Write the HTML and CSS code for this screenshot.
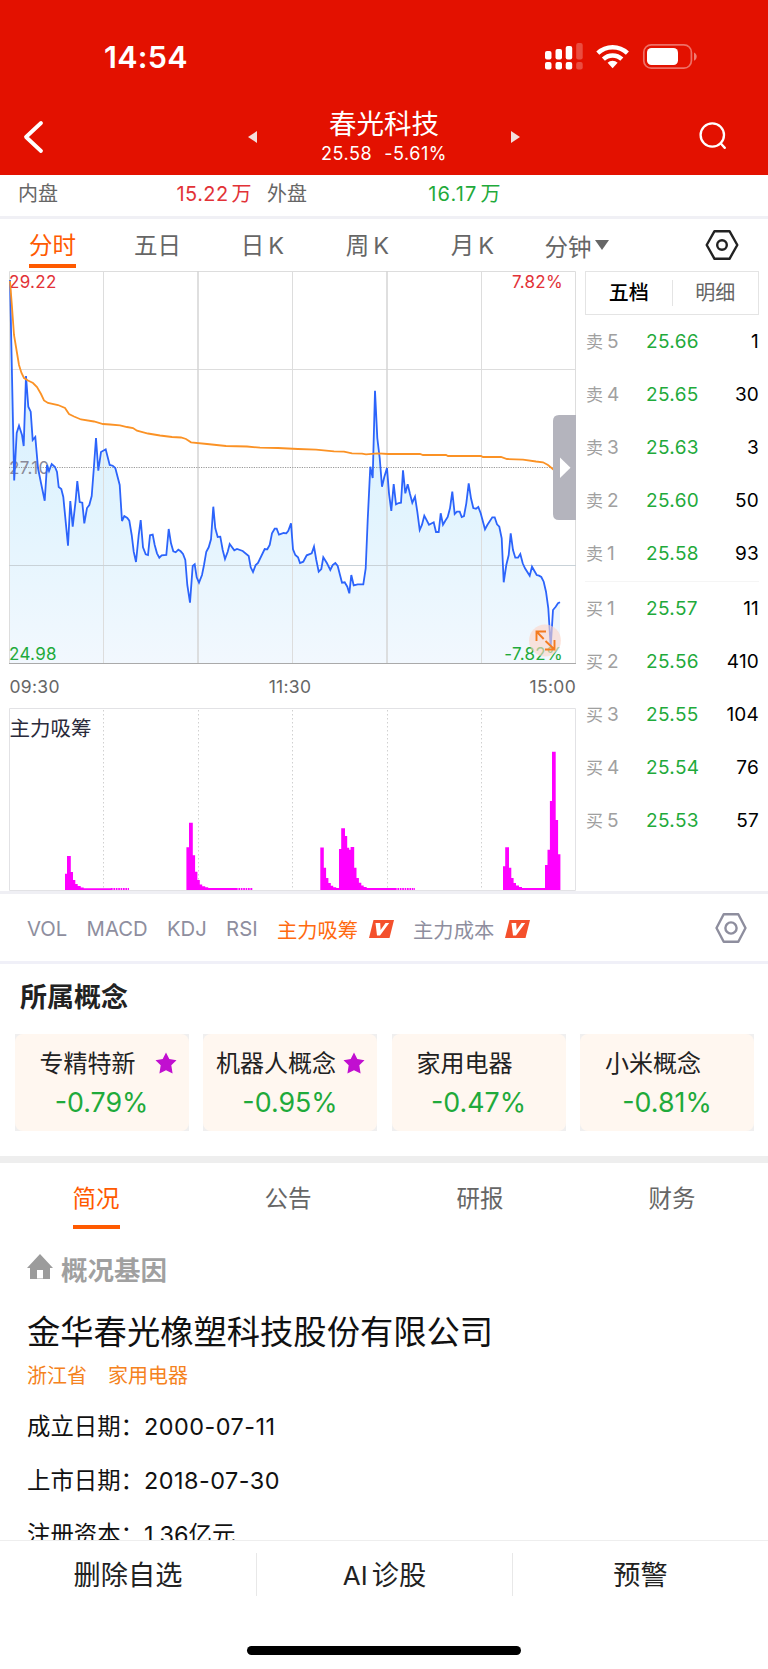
FILE: index.html
```
<!DOCTYPE html>
<html lang="zh-CN">
<head>
<meta charset="utf-8">
<title>春光科技</title>
<link rel="stylesheet" href="styles.css">
</head>
<body>
<div class="phone">

<header class="top">
    <div class="status">
        <span class="time">14:54</span>
        <svg class="status-icons" viewBox="540 40 160 32">
            <g fill="#fff">
                <rect x="545" y="51" width="6.5" height="8.5" rx="2"/><rect x="545" y="62" width="6.5" height="7.5" rx="2"/>
                <rect x="555.5" y="49" width="6.5" height="10.5" rx="2"/><rect x="555.5" y="62" width="6.5" height="7.5" rx="2"/>
                <rect x="565.7" y="46" width="6.5" height="13.5" rx="2"/><rect x="565.7" y="62" width="6.5" height="7.5" rx="2"/>
                <g opacity=".25"><rect x="576.2" y="43" width="6.5" height="16.5" rx="2"/><rect x="576.2" y="62" width="6.5" height="7.5" rx="2"/></g>
            </g>
            <g fill="none" stroke="#fff" stroke-width="4.4">
                <path d="M597.8 53.2a21.4 21.4 0 0 1 29.6 0"/>
                <path d="M603.4 59.2a13.2 13.2 0 0 1 18.4 0"/>
            </g>
            <path d="M607.6 62.8a7.2 7.2 0 0 1 10 0l-5 5.4z" fill="#fff"/>
            <rect x="643.8" y="44.8" width="47.6" height="23.4" rx="7.5" fill="none" stroke="#fff" stroke-opacity=".4" stroke-width="1.7"/>
            <rect x="647" y="48" width="31" height="17" rx="4.5" fill="#fff"/>
            <path d="M694 52.5c3.6 1.4 3.6 6.8 0 8.2z" fill="#fff" opacity=".45"/>
        </svg>
    </div>
    <div class="nav">
        <svg class="back" viewBox="0 0 24 36"><path d="M20 4L5 18l15 14" fill="none" stroke="#fff" stroke-width="3.8" stroke-linecap="round" stroke-linejoin="round"/></svg>
        <svg class="arrow" viewBox="0 0 9 12"><path d="M9 0v12L0 6z" fill="#f3dedc"/></svg>
        <div class="stock">
            <div class="stock-name">春光科技</div>
            <div class="stock-price"><span>25.58</span><span>-5.61%</span></div>
        </div>
        <svg class="arrow" viewBox="0 0 9 12"><path d="M0 0v12l9-6z" fill="#f3dedc"/></svg>
        <svg class="search" viewBox="0 0 30 30"><g fill="none" stroke="#fff" stroke-width="2.3" stroke-linecap="round"><circle cx="14.3" cy="14" r="11.7"/><path d="M22.6 22.3l4.2 4.6"/></g></svg>
    </div>
</header>

<div class="quote">
    <span class="quote-label">内盘</span><span class="quote-value up">15.22<i>万</i></span>
    <span class="quote-label">外盘</span><span class="quote-value down">16.17<i>万</i></span>
</div>

<nav class="periods">
    <a class="period active"><span>分时</span></a>
    <a class="period"><span>五日</span></a>
    <a class="period"><span>日<b>K</b></span></a>
    <a class="period"><span>周<b>K</b></span></a>
    <a class="period"><span>月<b>K</b></span></a>
    <a class="period minute"><span>分钟</span><svg viewBox="0 0 14 10"><path d="M0 0h14L7 10z" fill="#666"/></svg></a>
    <svg class="setting" viewBox="0 0 34 32"><g fill="none" stroke="#222" stroke-width="2.4" stroke-linejoin="round"><path d="M9.5 2.2h15L32.3 16l-7.8 13.8h-15L1.7 16z"/><circle cx="17" cy="16" r="4.8"/></g></svg>
</nav>

<main class="market">
    <div class="charts">
        <!-- chart coordinates are page coordinates -->
        <svg class="chart" viewBox="0 271 580 620">
            <defs>
                <linearGradient id="area" x1="0" y1="280" x2="0" y2="664" gradientUnits="userSpaceOnUse">
                    <stop offset="0" stop-color="#d2edfd"/><stop offset=".6" stop-color="#e2f4fe"/><stop offset="1" stop-color="#f2f8fe"/>
                </linearGradient>
            </defs>
            <path fill="url(#area)" d="M10 663V280L14.2 480.5 16.7 433 19 425.7 22 435 23.7 446 26 376 28.3 406.7 30.7 411.7 32.7 440 35.3 437 38 468 41 483 44.7 500.7 47 465 49 471 51.7 464 55 467 57 472 58.7 487 61.3 489 63.3 497 68 545.7 70.3 501 72.7 526.7 75.7 500 77.3 481 79.7 502 82.3 502.7 84.3 523.3 87 508 89.3 505 91.7 496 93.7 470 96 438 98.3 470.7 101 452 105.7 449.3 109.7 465 112.7 465.7 115.3 468 119.7 485 122 521 124.3 516 127.3 518 129.3 520.7 131.7 535 133.7 551.7 136 562 138.7 535 140.7 520 143 547.3 145.7 554.3 148 555 150 535.3 152.7 534.7 154.7 545 157 553.3 159.3 557.7 161.7 555.3 166.3 555 168.7 529 171 543.3 173.3 551.3 175.7 552.3 178.3 549.7 180.7 551.3 183 554 185.3 560 187.3 585 190 602.7 192.7 566 194.7 564.3 196.7 577.3 199 582.7 202 575 204 565 206.3 551.7 208.7 547.3 211 539.3 213.3 506.7 215.3 528.3 217.7 537 220.3 536.7 222.7 550 225 559 227.7 551.7 229.7 544 234.3 550.3 237 549 242.7 551 248.7 556 250.7 567.3 253 572 255.7 565 258 563 264.7 549 267.3 549.3 269.7 545 272 533.3 274.7 528.7 276.7 528.7 279 534.7 283.7 533 286.3 533.3 288.3 530.7 291 523.3 293 549.3 295.3 555 298 557.3 300 563 303.3 561.7 306.7 555.3 311.7 553.3 314 546.7 316.3 560 318.7 571.7 321.3 569 323.3 557.3 327 563.3 330.3 570 332.7 565 335.3 563 337.7 566 340 575 342 582.7 344.7 582.3 347.3 586.7 349.3 593.3 351.3 575 353.7 585.3 357.7 584.3 363.3 584.3 365.7 568.3 367.7 520 370.3 466.7 372.7 478 375 390.7 377.3 438 379.7 458 382 486.7 384.3 477 387 468 389 493.3 391.3 511 393.7 484 396 504.3 398.7 503 401 502.7 403 470.3 405.3 493.3 407.7 484.3 410 494 412.3 502.7 415 496.7 417.3 511.7 419.7 530 422 524.7 424.3 515.7 429 524.7 433.7 522.3 436 532 438.7 532 440.7 513.3 443 524.7 445.3 520.7 447.7 517 450 508.3 452.3 491.7 454.7 514 457 511.7 459.7 511.7 461.7 517 464 516 466.3 503.3 468.7 483.3 471 498.3 473.3 508 476 508.7 478.3 507 480.7 513.3 485 529.3 487.3 525 492.3 517.3 494.7 517.3 497 524.3 499.3 526.7 501.7 538.3 503.7 582.3 506.3 565 508.7 555 510.7 533.3 513 550 515.3 557.7 518 557.7 520.3 554 522.7 563.3 525 568.3 529.7 575.7 532 566.7 536.7 575 539 575.7 541.3 577 543.7 581.7 546 591.7 548.3 608.3 550.7 646.7 553 610 555.7 606.7 558 603.3 560 602.3V663z"/>
            <g class="grid">
                <path d="M9.5 271.5h566V663M9.5 271.5V663M103.5 271V663M292.5 271V663M481.5 271V663M9 369.5h567"/>
                <path class="strong" d="M198 271V663M387 271V663"/>
                <path class="mid" d="M9 565.5h567"/>
                <path class="base" d="M9 663.5h567"/>
                <path class="dotted" d="M9 467.5h545"/>
            </g>
            <g class="axis">
                <text class="up" x="9" y="288">29.22</text>
                <text class="up" x="563" y="288" text-anchor="end">7.82%</text>
                <text x="9" y="474" fill="#8a8a99">27.10</text>
            </g>
            <path class="price" d="M10 280L14.2 480.5 16.7 433 19 425.7 22 435 23.7 446 26 376 28.3 406.7 30.7 411.7 32.7 440 35.3 437 38 468 41 483 44.7 500.7 47 465 49 471 51.7 464 55 467 57 472 58.7 487 61.3 489 63.3 497 68 545.7 70.3 501 72.7 526.7 75.7 500 77.3 481 79.7 502 82.3 502.7 84.3 523.3 87 508 89.3 505 91.7 496 93.7 470 96 438 98.3 470.7 101 452 105.7 449.3 109.7 465 112.7 465.7 115.3 468 119.7 485 122 521 124.3 516 127.3 518 129.3 520.7 131.7 535 133.7 551.7 136 562 138.7 535 140.7 520 143 547.3 145.7 554.3 148 555 150 535.3 152.7 534.7 154.7 545 157 553.3 159.3 557.7 161.7 555.3 166.3 555 168.7 529 171 543.3 173.3 551.3 175.7 552.3 178.3 549.7 180.7 551.3 183 554 185.3 560 187.3 585 190 602.7 192.7 566 194.7 564.3 196.7 577.3 199 582.7 202 575 204 565 206.3 551.7 208.7 547.3 211 539.3 213.3 506.7 215.3 528.3 217.7 537 220.3 536.7 222.7 550 225 559 227.7 551.7 229.7 544 234.3 550.3 237 549 242.7 551 248.7 556 250.7 567.3 253 572 255.7 565 258 563 264.7 549 267.3 549.3 269.7 545 272 533.3 274.7 528.7 276.7 528.7 279 534.7 283.7 533 286.3 533.3 288.3 530.7 291 523.3 293 549.3 295.3 555 298 557.3 300 563 303.3 561.7 306.7 555.3 311.7 553.3 314 546.7 316.3 560 318.7 571.7 321.3 569 323.3 557.3 327 563.3 330.3 570 332.7 565 335.3 563 337.7 566 340 575 342 582.7 344.7 582.3 347.3 586.7 349.3 593.3 351.3 575 353.7 585.3 357.7 584.3 363.3 584.3 365.7 568.3 367.7 520 370.3 466.7 372.7 478 375 390.7 377.3 438 379.7 458 382 486.7 384.3 477 387 468 389 493.3 391.3 511 393.7 484 396 504.3 398.7 503 401 502.7 403 470.3 405.3 493.3 407.7 484.3 410 494 412.3 502.7 415 496.7 417.3 511.7 419.7 530 422 524.7 424.3 515.7 429 524.7 433.7 522.3 436 532 438.7 532 440.7 513.3 443 524.7 445.3 520.7 447.7 517 450 508.3 452.3 491.7 454.7 514 457 511.7 459.7 511.7 461.7 517 464 516 466.3 503.3 468.7 483.3 471 498.3 473.3 508 476 508.7 478.3 507 480.7 513.3 485 529.3 487.3 525 492.3 517.3 494.7 517.3 497 524.3 499.3 526.7 501.7 538.3 503.7 582.3 506.3 565 508.7 555 510.7 533.3 513 550 515.3 557.7 518 557.7 520.3 554 522.7 563.3 525 568.3 529.7 575.7 532 566.7 536.7 575 539 575.7 541.3 577 543.7 581.7 546 591.7 548.3 608.3 550.7 646.7 553 610 555.7 606.7 558 603.3 560 602.3"/>
            <path class="average" d="M10 281L12 307 14 335 17 353 19 365 21.5 373 24 378 28 380.5 33 383 37 387 41 394 44 400.5 48 403 58 405 65 408 69 414 74 416.5 81 419.5 94 421.5 103 424 110 424.5 120 425.3 127 427 133 428 137 430.7 148 433.5 160 435.5 172 437 181 437.5 186 439 191 442.3 207 444 226 446 247 446.5 260 447.7 278 448 298 449 316 449.7 334 451.3 344 451.7 352 453.3 362 453.7 366 454.3 378 453.3 388 454 420 454 423 455 446 455 448 456 481 456 483 457 501 457 507 459 523 459.7 536 461.5 543 462.3 548 465 554 470"/>
            <path d="M576 415h-17q-6 0-6 6v93q0 6 6 6h17z" fill="#b4b4bd"/>
            <path d="M560 457.5v20.5l10.5-10.2z" fill="#fff"/>
            <g class="axis">
                <text class="down" x="9" y="660">24.98</text>
                <text class="down" x="563" y="660" text-anchor="end">-7.82%</text>
            </g>
            <circle cx="545" cy="640.5" r="16" fill="#fcd5c8" fill-opacity=".62"/>
            <path d="M536.5 641v-9.5h9.5M537 632l6.7 7M554.5 640v9.5H545M554 649l-8.5-8" fill="none" stroke="#f47b20" stroke-width="1.9"/>
            <g class="axis hours">
                <text x="9.5" y="692.5">09:30</text>
                <text x="290" y="692.5" text-anchor="middle">11:30</text>
                <text x="576" y="692.5" text-anchor="end">15:00</text>
            </g>

            <path class="frame" d="M9.5 708.5h566v182h-566z"/>
            <path class="dots" d="M103.5 710V890M198.5 710V890M292.5 710V890M387.5 710V890M481.5 710V890"/>
            <text class="sub-title" x="9.5" y="736">主力吸筹</text>
            <g fill="#f0f">
                <path d="M65 890V873.7h2V856h3.8v16h2.2v8h2.3v4h2.4v2h3v1.5h3v.8H111v1.7z"/>
                <path d="M186.4 890v-42.7h2.6v-24.6h3.8v32.6h2.3v16.4h2.3v8.3h2.4v4.5h2.4v1.8h3v1h3v.8H236v1.9z"/>
                <path d="M320.3 890v-42.5h3.5v20.2h2.3V878h2.3v5h2.4v2.7h2.4v1.5h3v.8h2.8v-39h2.2v-20.7h3.8V836h2.2v11.7h2v2h1.4V847h3.6v20.7h2.3V878h2.4v4.7h2.4v2.8h2.4v1.5h3v1H395v2z"/>
                <path d="M503 890v-23.7h2.2v-19h3.8v20.4h2.3V878h2.3v5h2.4v2.5h3v1.5h3v1H545v-23h2.5v-15.3h2.4V801h2.1v-49.3h3.7V820h2.4v34.3h2.3V890z"/>
            </g>
            <path d="M111 889h18M236 889h17M395 889h20" stroke="#f0f" stroke-width="2" stroke-dasharray="1.7 .7"/>
        </svg>
    </div>

    <aside class="book">
        <div class="book-tabs"><span class="on">五档</span><span>明细</span></div>
        <ul class="levels sell">
            <li><span>卖<b>5</b></span><em>25.66</em><strong>1</strong></li>
            <li><span>卖<b>4</b></span><em>25.65</em><strong>30</strong></li>
            <li><span>卖<b>3</b></span><em>25.63</em><strong>3</strong></li>
            <li><span>卖<b>2</b></span><em>25.60</em><strong>50</strong></li>
            <li><span>卖<b>1</b></span><em>25.58</em><strong>93</strong></li>
        </ul>
        <ul class="levels">
            <li><span>买<b>1</b></span><em>25.57</em><strong>11</strong></li>
            <li><span>买<b>2</b></span><em>25.56</em><strong>410</strong></li>
            <li><span>买<b>3</b></span><em>25.55</em><strong>104</strong></li>
            <li><span>买<b>4</b></span><em>25.54</em><strong>76</strong></li>
            <li><span>买<b>5</b></span><em>25.53</em><strong>57</strong></li>
        </ul>
    </aside>
</main>

<div class="indicators">
    <span>VOL</span><span>MACD</span><span>KDJ</span><span>RSI</span>
    <span class="on">主力吸筹</span>
    <svg class="vip" viewBox="0 0 25 18"><path d="M4.5 0H25l-4.5 18H0z" fill="#f4502c"/><path d="M6.5 3h4.7l.4 7L16.500 3h3.700L11 15.500H8z" fill="#fff"/></svg>
    <span>主力成本</span>
    <svg class="vip" viewBox="0 0 25 18"><path d="M4.5 0H25l-4.5 18H0z" fill="#f4502c"/><path d="M6.5 3h4.7l.4 7L16.500 3h3.700L11 15.500H8z" fill="#fff"/></svg>
    <svg class="setting" viewBox="0 0 32 32"><g fill="none" stroke="#8e8e9e" stroke-width="2.4" stroke-linejoin="round"><path d="M8.7 2.2h14.6L30.5 16l-7.2 13.8H8.7L1.500 16z"/><circle cx="16" cy="16" r="5.6"/></g></svg>
</div>

<section class="concepts">
    <h2>所属概念</h2>
    <div class="cards">
        <div class="card"><div class="card-in">
            <div class="card-name"><span>专精特新</span><svg viewBox="0 0 22 22"><path d="M11 .5l3.3 6.6 7.2 1.1-5.2 5.1 1.3 8.2-6.6-3.2-6.6 3.2 1.3-8.2L.5 8.200l7.2-1.1z" fill="#c10fd0"/></svg></div>
            <div class="card-rate">-0.79%</div>
        </div></div>
        <div class="card"><div class="card-in">
            <div class="card-name"><span>机器人概念</span><svg viewBox="0 0 22 22"><path d="M11 .5l3.3 6.6 7.2 1.1-5.2 5.1 1.3 8.2-6.6-3.2-6.6 3.2 1.3-8.2L.5 8.200l7.2-1.1z" fill="#c10fd0"/></svg></div>
            <div class="card-rate">-0.95%</div>
        </div></div>
        <div class="card"><div class="card-in">
            <div class="card-name"><span>家用电器</span><svg viewBox="0 0 22 22"></svg></div>
            <div class="card-rate">-0.47%</div>
        </div></div>
        <div class="card"><div class="card-in">
            <div class="card-name"><span>小米概念</span><svg viewBox="0 0 22 22"></svg></div>
            <div class="card-rate">-0.81%</div>
        </div></div>
    </div>
</section>

<nav class="info-tabs">
    <a class="active">简况</a><a>公告</a><a>研报</a><a>财务</a>
</nav>

<section class="profile">
    <h3><svg viewBox="0 0 26 25"><path d="M13 0l13 14h-3v11H3V14H0zM10 16v8.500h6V16z" fill="#9c9c9c" fill-rule="evenodd"/></svg>概况基因</h3>
    <div class="company">金华春光橡塑科技股份有限公司</div>
    <div class="tags"><span>浙江省</span><span>家用电器</span></div>
    <dl>
        <dt>成立日期：</dt><dd>2000-07-11</dd>
        <dt>上市日期：</dt><dd>2018-07-30</dd>
        <dt>注册资本：</dt><dd>1.36亿元</dd>
    </dl>
</section>

<footer class="actions">
    <a>删除自选</a><a><b>AI</b>诊股</a><a>预警</a>
    <div class="home"></div>
</footer>

</div>
</body>
</html>
```
FILE: styles.css
```
* {box-sizing:border-box;}
body {margin:0; background:#fff; font-family:Inter, "Noto Sans CJK SC", sans-serif; color:#111;}
ul, dl, dd, h2, h3 {margin:0; padding:0;}
li {list-style:none;}
i, em {font-style:normal;}
b, strong {font-weight:400;}
svg {display:block; flex:none;}
.phone {width:768px; height:1669px; overflow:hidden; display:flex; flex-direction:column;}
.phone > * {flex:none;}
.up {color:#e23237; fill:#e23237;}
.down {color:#1faa3b; fill:#1faa3b;}

/* red header */
.top {height:175px; background:#e31100; color:#fff;}
.status {height:104px; padding:12px 68px 0 104px; display:flex; align-items:center; justify-content:space-between;}
.time {font-size:30.5px; font-weight:600; letter-spacing:.3px; line-height:36px; margin-top:-2px;}
.status-icons {width:160px; height:32px; margin-top:-4px;}
.nav {height:71px; display:flex; align-items:center; padding:0 40px 6px 21px;}
.back {width:24px; height:36px;}
.arrow {width:9px; height:12px;}
.back + .arrow {margin-left:203px;}
.stock {width:254px; text-align:center; margin-top:-2px;}
.stock-name {font-size:27.5px; line-height:36px;}
.stock-price {font-size:18px; line-height:24px; display:flex; justify-content:center; gap:12px; letter-spacing:.55px;}
.search {width:30px; height:30px; margin-left:auto; margin-top:-2px;}

.quote {height:44px; padding:0 18px; display:flex; align-items:flex-start; line-height:39px; font-size:20px; border-bottom:3.5px solid #f0f0f5;}
.quote-label {width:40px; color:#666;}
.quote-value {width:193.5px; text-align:right; margin-right:15.5px; letter-spacing:.4px;}
.quote-value i {margin-left:3px; letter-spacing:0;}
.quote-value.down {letter-spacing:1.2px;}

.periods {height:52px; display:flex; position:relative;}
.period {width:105px; text-align:center; font-size:23.5px; line-height:53px; color:#666;}
.period b {margin-left:4px;}
.period span {display:inline-block; height:49px; vertical-align:top;}
.period.active span {color:#ff5a00; border-bottom:4px solid #ff5a00;}
.period.minute {display:flex; align-items:center; width:104px; padding-left:19.5px;}
.period.minute svg {width:14px; height:10px; margin-left:3px;}
.periods .setting {width:34px; height:32px; margin:10px 0 0 76px;}

/* chart and order book */
.market {display:flex; height:623px; border-bottom:3.5px solid #efeff4;}
.charts, .chart {width:580px; height:620px;}
.grid path {fill:none; stroke:#ddd; stroke-width:1;}
.grid .strong {stroke-width:1.5; stroke:#d5d5d5;}
.grid .mid {stroke:#c9d2d8;}
.grid .base {stroke:#aaa;}
.grid .dotted {stroke:#999; stroke-dasharray:1.2 1.2;}
.price {fill:none; stroke:#2c64fb; stroke-width:1.8;}
.average {fill:none; stroke:#fb9225; stroke-width:1.8;}
.axis text {font-size:17px; letter-spacing:.3px;}
.hours text {fill:#666; font-size:17.5px;}
.frame {fill:none; stroke:#e2e2e5;}
.dots {fill:none; stroke:#d0d0d0; stroke-dasharray:1.5 2.5;}
.sub-title {font-size:20.5px; fill:#2a2a3a;}

.book {width:174px; margin-left:5px;}
.book-tabs {height:44px; border:1px solid #e4e4e4; display:flex; align-items:center;}
.book-tabs span {flex:1; text-align:center; font-size:20px; line-height:26px; color:#666;}
.book-tabs span + span {border-left:1px solid #e4e4e4;}
.book-tabs .on {color:#000; font-weight:500;}
.levels li {height:53.2px; display:flex; align-items:center; font-size:19px; line-height:24px; padding-left:1px;}
.levels.sell {border-bottom:1px solid #f5f5f5;}
.levels span {width:60px; color:#a0a0a0; font-size:17px;}
.levels span b {font-size:19px; margin-left:4px;}
.levels em {color:#1faa3b; flex:1; letter-spacing:.35px;}
.levels strong {color:#000; letter-spacing:.2px;}

.indicators {height:70px; padding:2px 21px 0 27px; display:flex; align-items:center; font-size:20.3px; color:#8e8e9e; border-bottom:3.5px solid #f0f0f8;}
.indicators span {margin-right:19.3px;}
.indicators .on {color:#ff6a10;}
.indicators span.on, .indicators .vip + span {margin-right:11px;}
.indicators .vip {width:25px; height:18px; margin-right:19px;}
.indicators .setting {width:32px; height:32px; margin:-2px 0 0 auto;}

.concepts {height:199px; border-bottom:7px solid #eee;}
.concepts h2 {font-size:27px; line-height:36px; padding:16px 20px 18px; font-weight:700; color:#222;}
.cards {display:grid; grid-template-columns:repeat(4, 174px); gap:14.5px; padding-left:14.5px;}
.card {background:#f0efef; height:97px;}
.card-in {background:#fff7f0; border-radius:8px; height:97px; padding-top:13px; text-align:center;}
.card-name {display:flex; align-items:center; padding:0 12px 0 6px; height:34px; color:#222;}
.card-name span {flex:1; font-size:24px; line-height:34px; white-space:nowrap; margin:0 -4px;}
.card-name svg {width:22px; height:22px; margin-top:-2px;}
.card-rate {font-size:26.8px; line-height:42px; color:#1faa3b;}

/* company profile */
.info-tabs {height:72px; display:grid; grid-template-columns:repeat(4, 1fr); justify-items:center;}
.info-tabs a {font-size:23.5px; line-height:71px; color:#666; height:66px;}
.info-tabs .active {color:#ff5a00; border-bottom:4px solid #ff5a00;}
.profile {height:305px; overflow:hidden; padding-left:27px;}
.profile h3 {display:flex; align-items:center; font-size:26.5px; line-height:36px; font-weight:700; color:#a0a0a0; padding-top:17px;}
.profile h3 svg {width:26px; height:25px; margin:-7px 8px 0 0;}
.company {font-size:33.3px; line-height:44px; padding-top:22px; white-space:nowrap;}
.tags {display:flex; gap:21px; font-size:20px; line-height:28px; color:#f58220; padding-top:8px;}
.profile dl {display:grid; grid-template-columns:117px 1fr; font-size:23.4px; line-height:54px; padding-top:10px;}
.profile dt {white-space:nowrap;}
.profile dd {letter-spacing:.5px;}
.profile dd:last-child {letter-spacing:0;}

.actions {position:relative; height:129px; border-top:1px solid #eee; background:#fff; display:grid; grid-template-columns:256px 256px 256px; align-content:start; padding-top:12px;}
.actions a {height:43px; text-align:center; font-size:27.2px; line-height:45px; color:#222;}
.actions a + a {border-left:1px solid #e8e8e8;}
.actions b {margin-right:4px; font-size:26px;}
.home {grid-column:1 / 4; justify-self:center; margin-top:50px; width:274px; height:9px; border-radius:5px; background:#000;}
```
